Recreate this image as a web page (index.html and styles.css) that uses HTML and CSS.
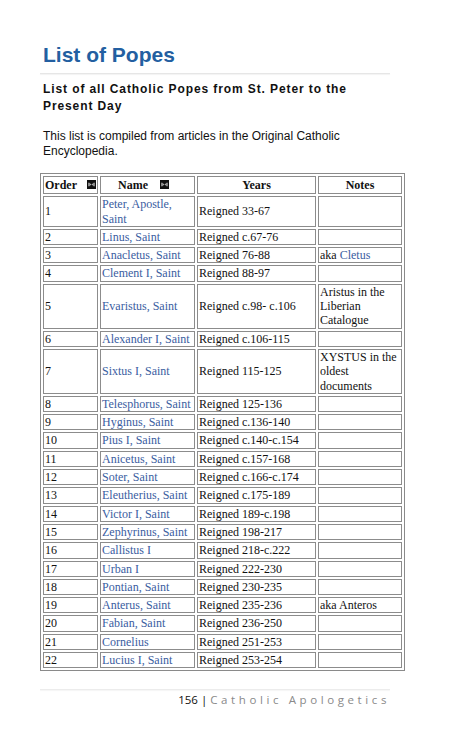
FILE: index.html
```html
<!DOCTYPE html>
<html>
<head>
<meta charset="utf-8">
<link rel="stylesheet" href="styles.css">
</head>
<body>
<div class="page">
  <h1 class="title">List of Popes</h1>
  <div class="rule"></div>
  <h2 class="subtitle">List of all Catholic Popes from St. Peter to the Present Day</h2>
  <p class="intro">This list is compiled from articles in the Original Catholic Encyclopedia.</p>
  <table class="popes">
    <colgroup>
      <col class="c-order"><col class="c-name"><col class="c-years"><col class="c-notes">
    </colgroup>
    <thead>
      <tr>
        <th class="th-order">Order<svg class="sort" viewBox="0 0 10 10" width="9" height="9"><rect width="10" height="10" fill="#111"/><path d="M2 3v4M8 3v4" stroke="#ccc" stroke-width="1"/><path d="M2.5 3L5 5L2.5 7zM7.5 3L5 5L7.5 7z" fill="#aaa"/></svg></th>
        <th class="th-name">Name<svg class="sort sort-name" viewBox="0 0 10 10" width="9" height="9"><rect width="10" height="10" fill="#111"/><path d="M2 3v4M8 3v4" stroke="#ccc" stroke-width="1"/><path d="M2.5 3L5 5L2.5 7zM7.5 3L5 5L7.5 7z" fill="#aaa"/></svg></th>
        <th>Years</th>
        <th>Notes</th>
      </tr>
    </thead>
    <tbody>
      <tr><td>1</td><td><a>Peter, Apostle, Saint</a></td><td>Reigned 33-67</td><td></td></tr>
      <tr><td>2</td><td><a>Linus, Saint</a></td><td>Reigned c.67-76</td><td></td></tr>
      <tr><td>3</td><td><a>Anacletus, Saint</a></td><td>Reigned 76-88</td><td>aka <a>Cletus</a></td></tr>
      <tr><td>4</td><td><a>Clement I, Saint</a></td><td>Reigned 88-97</td><td></td></tr>
      <tr><td>5</td><td><a>Evaristus, Saint</a></td><td>Reigned c.98- c.106</td><td>Aristus in the Liberian Catalogue</td></tr>
      <tr><td>6</td><td><a>Alexander I, Saint</a></td><td>Reigned c.106-115</td><td></td></tr>
      <tr><td>7</td><td><a>Sixtus I, Saint</a></td><td>Reigned 115-125</td><td>XYSTUS in the oldest documents</td></tr>
      <tr><td>8</td><td><a>Telesphorus, Saint</a></td><td>Reigned 125-136</td><td></td></tr>
      <tr><td>9</td><td><a>Hyginus, Saint</a></td><td>Reigned c.136-140</td><td></td></tr>
      <tr><td>10</td><td><a>Pius I, Saint</a></td><td>Reigned c.140-c.154</td><td></td></tr>
      <tr><td>11</td><td><a>Anicetus, Saint</a></td><td>Reigned c.157-168</td><td></td></tr>
      <tr><td>12</td><td><a>Soter, Saint</a></td><td>Reigned c.166-c.174</td><td></td></tr>
      <tr><td>13</td><td><a>Eleutherius, Saint</a></td><td>Reigned c.175-189</td><td></td></tr>
      <tr><td>14</td><td><a>Victor I, Saint</a></td><td>Reigned 189-c.198</td><td></td></tr>
      <tr><td>15</td><td><a>Zephyrinus, Saint</a></td><td>Reigned 198-217</td><td></td></tr>
      <tr><td>16</td><td><a>Callistus I</a></td><td>Reigned 218-c.222</td><td></td></tr>
      <tr><td>17</td><td><a>Urban I</a></td><td>Reigned 222-230</td><td></td></tr>
      <tr><td>18</td><td><a>Pontian, Saint</a></td><td>Reigned 230-235</td><td></td></tr>
      <tr><td>19</td><td><a>Anterus, Saint</a></td><td>Reigned 235-236</td><td>aka Anteros</td></tr>
      <tr><td>20</td><td><a>Fabian, Saint</a></td><td>Reigned 236-250</td><td></td></tr>
      <tr><td>21</td><td><a>Cornelius</a></td><td>Reigned 251-253</td><td></td></tr>
      <tr><td>22</td><td><a>Lucius I, Saint</a></td><td>Reigned 253-254</td><td></td></tr>
    </tbody>
  </table>
  <div class="foot-rule"></div>
  <div class="footer"><span class="pnum">156 |</span> <span class="book">Catholic Apologetics</span></div>
</div>
</body>
</html>
```

FILE: styles.css
```css
html, body {
  margin: 0;
  padding: 0;
  background: #ffffff;
}

.page {
  padding: 43px 0 0 40px;
  width: 350px;
}

.title {
  margin: 0 0 0 3px;
  font-family: "Liberation Sans", Arial, sans-serif;
  font-weight: bold;
  font-size: 21px;
  line-height: 24px;
  color: #235fa1;
}

.rule {
  margin-top: 6px;
  height: 1px;
  background: #e6e6e6;
  box-shadow: 0 1px 1px #f2f2f2;
}

.subtitle {
  margin: 7px 0 0 3px;
  font-family: "Liberation Sans", Arial, sans-serif;
  font-weight: bold;
  font-size: 12px;
  line-height: 17px;
  letter-spacing: 0.9px;
  color: #111;
}

.intro {
  margin: 14px 0 0 3px;
  font-family: "Liberation Sans", Arial, sans-serif;
  font-size: 12px;
  line-height: 15px;
  color: #111;
  width: 310px;
}

.popes {
  margin-top: 14px;
  table-layout: fixed;
  width: 365px;
  border: 1px solid #8a8a8a;
  border-spacing: 2px;
  font-family: "Liberation Serif", "Times New Roman", serif;
  font-size: 12px;
  line-height: 14.3px;
  color: #111;
}

.c-order { width: 55px; }
.c-name { width: 95px; }
.c-years { width: 119px; }
.c-notes { width: 84px; }

.popes th,
.popes td {
  border: 1px solid #8c8c8c;
  padding: 0 1px;
  vertical-align: middle;
}

.popes td {
  text-align: left;
}

.popes th {
  font-weight: bold;
  text-align: center;
  white-space: nowrap;
  padding-top: 1px;
  padding-bottom: 1px;
}

.popes .th-order {
  text-align: left;
}

.popes .th-name {
  padding-right: 9px;
}

.sort {
  display: inline-block;
  vertical-align: 0;
  margin-left: 10px;
}

.sort-name {
  margin-left: 12px;
}

.popes a {
  color: #3a5d9f;
  text-decoration: none;
}

.foot-rule {
  margin-top: 18px;
  height: 1px;
  background: #ececec;
  box-shadow: 0 1px 1px #f4f4f4;
}

.footer {
  margin-top: 3px;
  text-align: right;
  font-family: "Open Sans", "Liberation Sans", sans-serif;
  font-size: 11.5px;
  line-height: 14px;
  color: #111;
}

.pnum {
  color: #111;
}

.book {
  color: #8a8a8a;
  letter-spacing: 3.6px;
}
```
